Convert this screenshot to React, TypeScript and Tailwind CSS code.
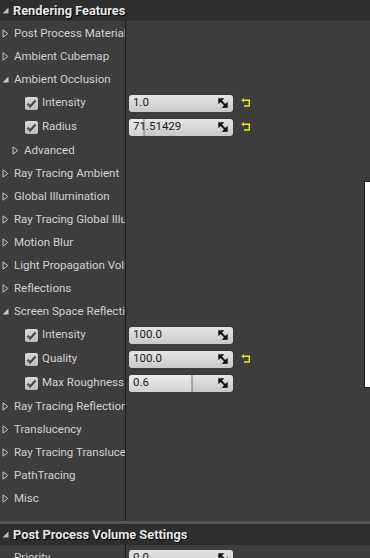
import React from "react";

const Collapsed = () => (
  <svg width="7" height="9" viewBox="0 0 7 9" className="shrink-0">
    <path d="M1 0.8 L5.8 4.5 L1 8.2 Z" fill="none" stroke="#c8c8c8" strokeWidth="1" />
  </svg>
);

const Expanded = ({ color = "#c8c8c8" }: { color?: string }) => (
  <svg width="7" height="7" viewBox="0 0 7 7" className="shrink-0">
    <path d="M6.5 0.5 L6.5 6.5 L0.5 6.5 Z" fill={color} />
  </svg>
);

const Check = () => (
  <div className="w-[13px] h-[13px] rounded-[2px] bg-gradient-to-b from-[#d8d8d8] to-[#bcbcbc] flex items-center justify-center shrink-0">
    <svg width="11" height="11" viewBox="0 0 11 11">
      <path d="M1.5 5.8 L4.2 8.4 L9.6 2.6" fill="none" stroke="#4a4a4a" strokeWidth="2.2" />
    </svg>
  </div>
);

const Spin = () => (
  <svg width="10" height="10" viewBox="0 0 10 10" className="shrink-0">
    <path d="M0.3 0.3 L6.3 0.3 L0.3 6.3 Z" fill="#111" />
    <path d="M9.7 9.7 L3.7 9.7 L9.7 3.7 Z" fill="#111" />
    <path d="M2 2 L8 8" stroke="#111" strokeWidth="2" />
  </svg>
);

const Reset = () => (
  <svg width="10" height="10" viewBox="0 0 10 10" className="shrink-0">
    <path d="M0.3 2.2 L3 0 L3 4.4 Z" fill="#f0f000" />
    <path d="M2.5 2.2 L8.3 2.2 L8.3 8 L3 8" fill="none" stroke="#f0f000" strokeWidth="1.4" />
  </svg>
);

const Field = ({ value, fill, reset }: { value: string; fill?: number; reset?: boolean }) => (
  <div className="flex items-center">
    <div className="relative w-[104px] h-[17px] rounded-[3px] bg-gradient-to-b from-[#e4e4e4] to-[#c9c9c9] flex items-center overflow-hidden">
      {fill !== undefined && (
        <div
          className="absolute left-0 top-0 bottom-0 bg-gradient-to-b from-[#ececec] to-[#d2d2d2] border-r border-[#a8a8a8] rounded-l-[3px] shadow-[1px_0_1px_rgba(0,0,0,0.25)]"
          style={{ width: fill }}
        />
      )}
      <span className="relative pl-[4px] text-[11.5px] text-[#1a1a1a] flex-1 leading-none">{value}</span>
      <div className="relative pr-[5px]">
        <Spin />
      </div>
    </div>
    {reset && (
      <div className="ml-[8px]">
        <Reset />
      </div>
    )}
  </div>
);

type RowProps = {
  label: string;
  kind: "collapsed" | "expanded" | "check";
  indent?: number;
  field?: { value: string; fill?: number; reset?: boolean };
};

const Row = ({ label, kind, indent = 0, field }: RowProps) => (
  <div className={`flex ${field ? "h-[24px]" : "h-[23px]"}`}>
    <div className="w-[126px] shrink-0 border-r border-[#1c1c1c] flex items-center overflow-hidden whitespace-nowrap pt-[2px]">
      {kind === "check" ? (
        <div className="flex items-center pl-[25px] gap-[4px]">
          <Check />
          <span className="text-[11.5px] text-[#d2d2d2]">{label}</span>
        </div>
      ) : (
        <div className="flex items-center gap-[5px]" style={{ paddingLeft: 2 + indent }}>
          {kind === "collapsed" ? <Collapsed /> : <Expanded />}
          <span className="text-[11.5px] text-[#d2d2d2]">{label}</span>
        </div>
      )}
    </div>
    <div className="flex-1 flex items-center pl-[3px] pt-[2px]">{field && <Field {...field} />}</div>
  </div>
);

const Header = ({ title }: { title: string }) => (
  <div className="h-[21px] bg-[#2e2e2e] flex items-center gap-[4px] pl-[2px]">
    <Expanded color="#bdbdbd" />
    <span className="text-[12.8px] font-bold text-[#e6e6e6] [text-shadow:1px_1px_0_#000]">{title}</span>
  </div>
);

export default function App() {
  const rows: RowProps[] = [
    { label: "Post Process Material", kind: "collapsed" },
    { label: "Ambient Cubemap", kind: "collapsed" },
    { label: "Ambient Occlusion", kind: "expanded" },
    { label: "Intensity", kind: "check", field: { value: "1.0", reset: true } },
    { label: "Radius", kind: "check", field: { value: "71.51429", fill: 15, reset: true } },
    { label: "Advanced", kind: "collapsed", indent: 10 },
    { label: "Ray Tracing Ambient", kind: "collapsed" },
    { label: "Global Illumination", kind: "collapsed" },
    { label: "Ray Tracing Global Illumination", kind: "collapsed" },
    { label: "Motion Blur", kind: "collapsed" },
    { label: "Light Propagation Volume", kind: "collapsed" },
    { label: "Reflections", kind: "collapsed" },
    { label: "Screen Space Reflections", kind: "expanded" },
    { label: "Intensity", kind: "check", field: { value: "100.0" } },
    { label: "Quality", kind: "check", field: { value: "100.0", reset: true } },
    { label: "Max Roughness", kind: "check", field: { value: "0.6", fill: 63 } },
    { label: "Ray Tracing Reflections", kind: "collapsed" },
    { label: "Translucency", kind: "collapsed" },
    { label: "Ray Tracing Translucency", kind: "collapsed" },
    { label: "PathTracing", kind: "collapsed" },
    { label: "Misc", kind: "collapsed" },
  ];
  return (
    <div className="relative w-[370px] h-[558px] overflow-hidden bg-[#3d3d3d] font-['Roboto',sans-serif]">
      <Header title="Rendering Features" />
      <div className="flex flex-col">
        {rows.map((r, i) => (
          <Row key={i} {...r} />
        ))}
        <div className="flex h-[12px]">
          <div className="w-[126px] border-r border-[#1c1c1c]" />
        </div>
      </div>
      <div className="h-[3px] bg-[#565656]" />
      <Header title="Post Process Volume Settings" />
      <div className="flex h-[24px]">
        <div className="w-[126px] shrink-0 border-r border-[#1c1c1c] flex items-center pl-[14px] pt-[2px]">
          <span className="text-[11.5px] text-[#d2d2d2]">Priority</span>
        </div>
        <div className="flex-1 flex items-center pl-[3px] pt-[2px]">
          <Field value="0.0" />
        </div>
      </div>
      <div className="absolute right-0 top-[181px] w-[6px] h-[207px] bg-white border-l border-t border-b border-[#202020]" />
    </div>
  );
}
